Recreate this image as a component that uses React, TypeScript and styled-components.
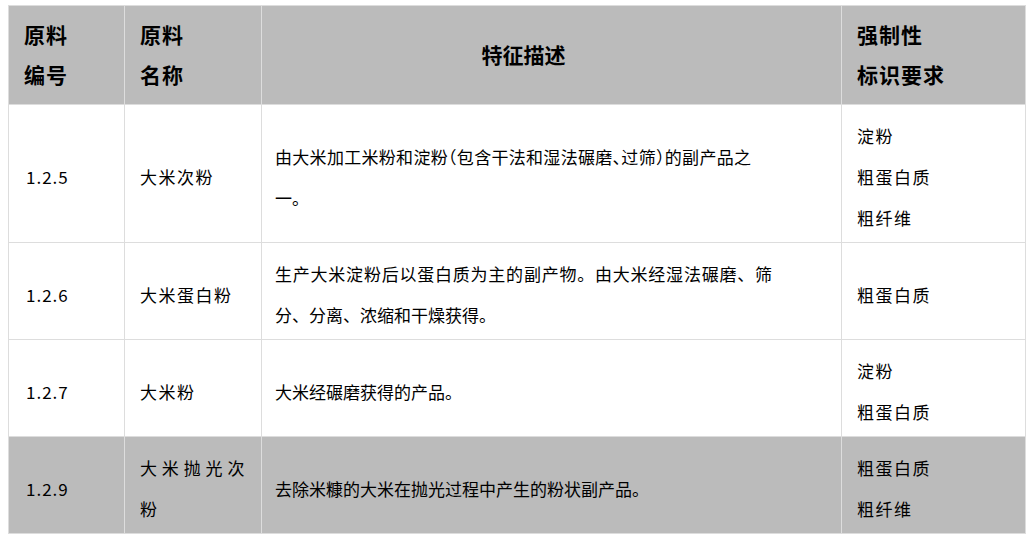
import React from 'react'
import styled, { createGlobalStyle } from 'styled-components'

const GlobalStyle = createGlobalStyle`
  body {
    margin: 0;
    background: #fff;
    font-family: 'Noto Sans CJK SC', 'Noto Sans', sans-serif;
    color: #000;
  }
`

const Page = styled.div`
  padding: 5px 10px 0 8px;
`

const Table = styled.table`
  width: 1017px;
  border-collapse: collapse;
  table-layout: fixed;
`

const HeadRow = styled.tr`
  background: #bbbbbb;
`

const Row = styled.tr<{ $shaded?: boolean }>`
  background: ${p => (p.$shaded ? '#bbbbbb' : '#fff')};
`

const Th = styled.th<{ $wide?: boolean }>`
  border: 1px solid #dddddd;
  padding: ${p => (p.$wide ? '8px 69px 10px 13px' : '8px 15px 10px 15px')};
  font-size: 21px;
  font-weight: 700;
  line-height: 40px;
  letter-spacing: ${p => (p.$wide ? '0' : '1px')};
  text-align: ${p => (p.$wide ? 'center' : 'left')};
  vertical-align: middle;
`

const Td = styled.td<{ $wide?: boolean }>`
  border: 1px solid #dddddd;
  padding: ${p => (p.$wide ? '10px 69px 4px 13px' : '10px 15px 4px 15px')};
  font-size: 17px;
  line-height: 41px;
  letter-spacing: ${p => (p.$wide ? '0' : '1.5px')};
  text-align: justify;
  vertical-align: middle;
`

const NumCell = styled(Td)`
  padding-left: 17px;
  letter-spacing: 1px;
`

// $tight: half-width punctuation, as the brackets in the source render narrow
const Desc = styled.div<{ $width: number; $tight?: boolean }>`
  max-width: ${p => p.$width}px;
  text-align: justify;
  font-feature-settings: ${p => (p.$tight ? "'halt'" : 'normal')};
`

interface Item {
  code: string
  name: string
  desc: string
  width?: number
  tight?: boolean
  marks: string[]
  shaded?: boolean
}

const items: Item[] = [
  {
    code: '1.2.5',
    name: '大米次粉',
    desc: '由大米加工米粉和淀粉（包含干法和湿法碾磨、过筛）的副产品之一。',
    width: 476,
    tight: true,
    marks: ['淀粉', '粗蛋白质', '粗纤维']
  },
  {
    code: '1.2.6',
    name: '大米蛋白粉',
    desc: '生产大米淀粉后以蛋白质为主的副产物。由大米经湿法碾磨、筛分、分离、浓缩和干燥获得。',
    marks: ['粗蛋白质']
  },
  {
    code: '1.2.7',
    name: '大米粉',
    desc: '大米经碾磨获得的产品。',
    marks: ['淀粉', '粗蛋白质']
  },
  {
    code: '1.2.9',
    name: '大米抛光次粉',
    desc: '去除米糠的大米在抛光过程中产生的粉状副产品。',
    marks: ['粗蛋白质', '粗纤维'],
    shaded: true
  }
]

const App = () => (
  <>
    <GlobalStyle />
    <Page>
      <Table>
        <colgroup>
          <col style={{ width: 116 }} />
          <col style={{ width: 137 }} />
          <col style={{ width: 580 }} />
          <col style={{ width: 184 }} />
        </colgroup>
        <thead>
          <HeadRow>
            <Th>
              原料
              <br />
              编号
            </Th>
            <Th>
              原料
              <br />
              名称
            </Th>
            <Th $wide>特征描述</Th>
            <Th>
              强制性
              <br />
              标识要求
            </Th>
          </HeadRow>
        </thead>
        <tbody>
          {items.map(item => (
            <Row key={item.code} $shaded={item.shaded}>
              <NumCell>{item.code}</NumCell>
              <Td>{item.name}</Td>
              <Td $wide>
                <Desc $width={item.width ?? 497} $tight={item.tight}>
                  {item.desc}
                </Desc>
              </Td>
              <Td>
                {item.marks.map((m, i) => (
                  <React.Fragment key={m}>
                    {i > 0 && <br />}
                    {m}
                  </React.Fragment>
                ))}
              </Td>
            </Row>
          ))}
        </tbody>
      </Table>
    </Page>
  </>
)

export default App
